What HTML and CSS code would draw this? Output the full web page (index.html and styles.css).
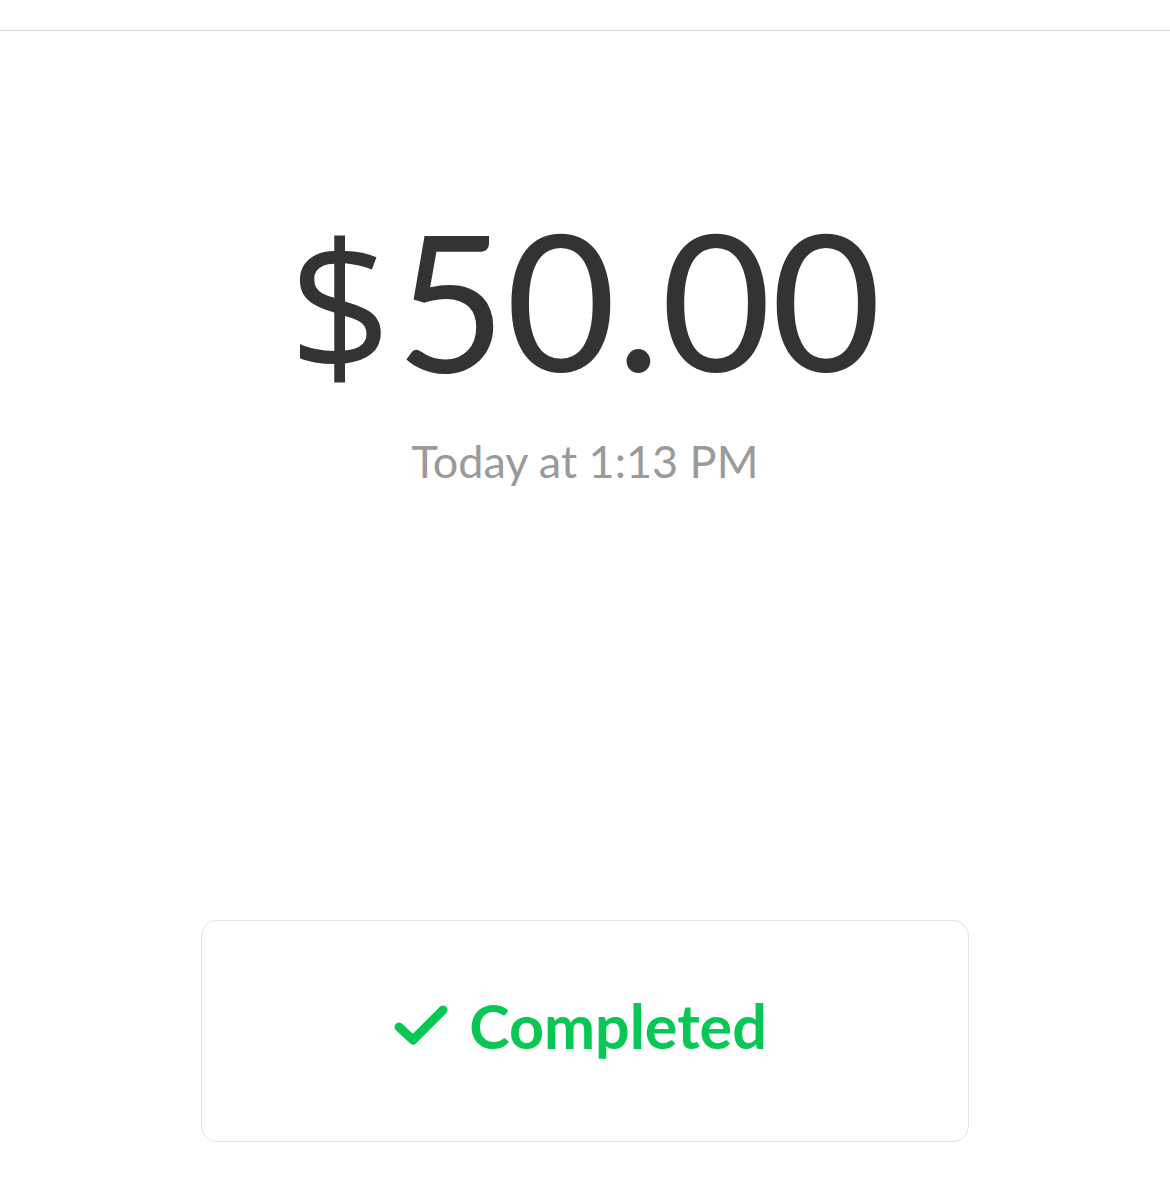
FILE: index.html
```html
<!DOCTYPE html>
<html>
<head>
<meta charset="utf-8">
<link rel="stylesheet" href="styles.css">
</head>
<body>
<div class="topbar"></div>
<main class="content">
  <div class="amount"><span class="currency">$</span>50.00</div>
  <div class="date">Today at 1:13 PM</div>
  <div class="status-card">
    <div class="status">
      <svg class="check" width="56" height="42" viewBox="0 0 56 42"><path d="M6 23 L20 36 L50 6" fill="none" stroke="#08c755" stroke-width="9" stroke-linecap="round" stroke-linejoin="round"/></svg>
      <span class="status-text">Completed</span>
    </div>
  </div>
</main>
</body>
</html>
```
FILE: styles.css
```css
html, body {
  margin: 0;
  padding: 0;
  background: #ffffff;
}
body {
  width: 1170px;
  height: 1200px;
  overflow: hidden;
  font-family: Lato, "Open Sans", sans-serif;
}
.topbar {
  height: 30px;
  border-bottom: 1px solid #d8d8d8;
}
.content {
  display: flex;
  flex-direction: column;
  align-items: center;
}
.amount {
  margin-top: 172px;
  font-size: 190px;
  line-height: 1;
  color: #333333;
  font-weight: 400;
}
.currency {
  font-family: "Open Sans", sans-serif;
  font-size: 180px;
  margin-right: 4px;
}
.date {
  margin-top: 46px;
  font-size: 45px;
  line-height: 1;
  color: #9a9a9a;
}
.status-card {
  margin-top: 436px;
  width: 766px;
  height: 220px;
  border: 1.5px solid #e3e3e3;
  border-radius: 16px;
  display: flex;
  align-items: center;
  justify-content: center;
}
.status {
  display: flex;
  align-items: center;
  gap: 20px;
  margin-right: 10px;
  margin-bottom: 12px;
}
.status-text {
  font-size: 61px;
  font-weight: 700;
  color: #08c755;
}
```
